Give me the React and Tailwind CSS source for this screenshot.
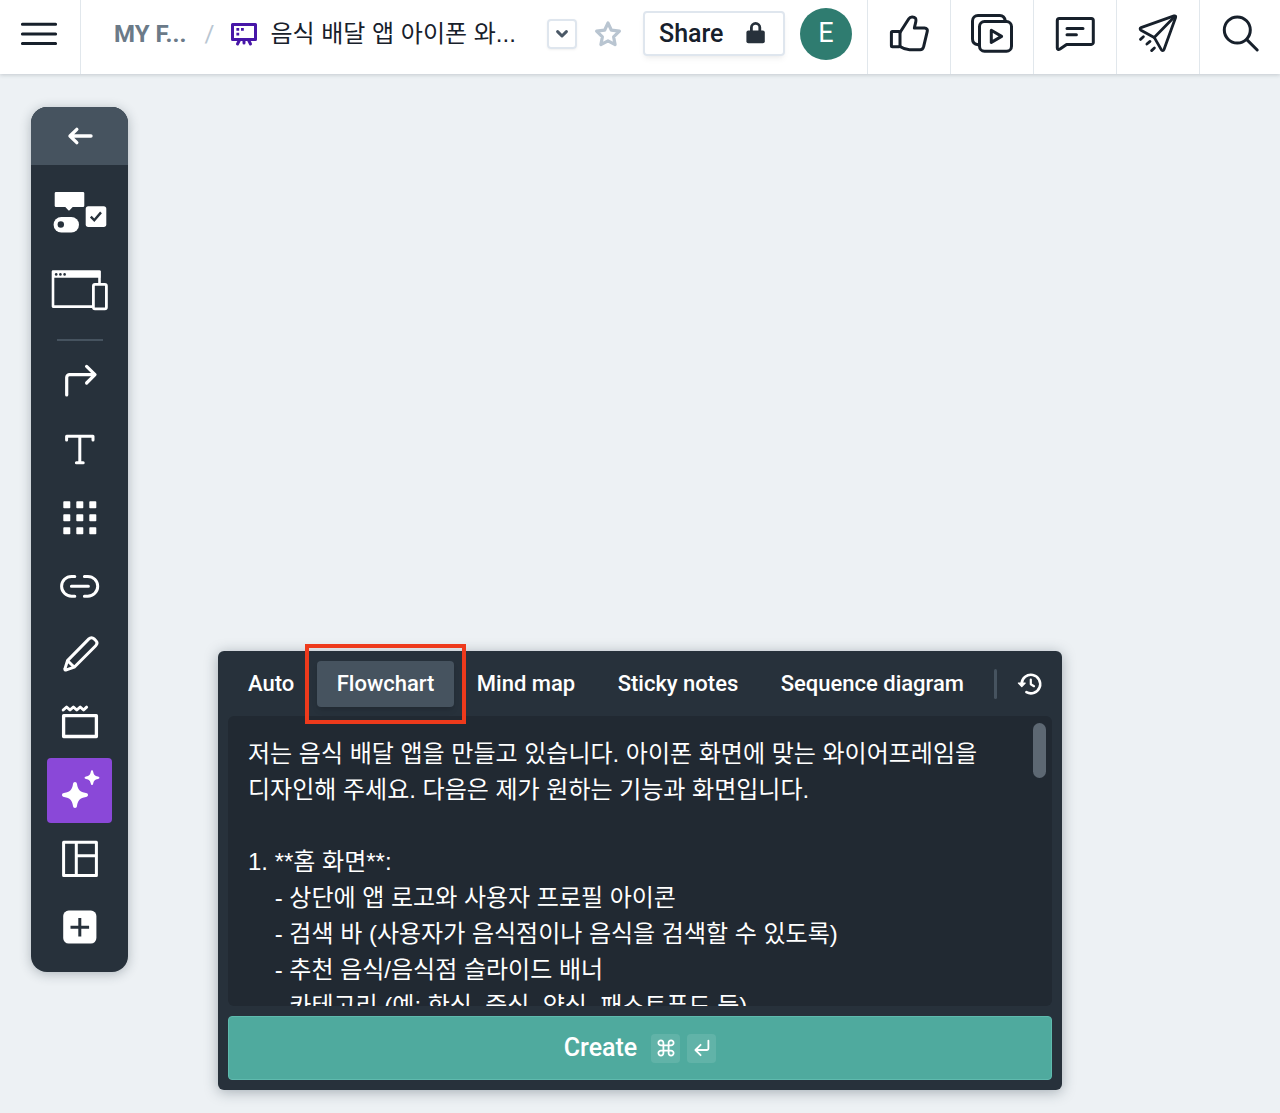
import React from "react";

const PROMPT = `저는 음식 배달 앱을 만들고 있습니다. 아이폰 화면에 맞는 와이어프레임을 디자인해 주세요. 다음은 제가 원하는 기능과 화면입니다.

1. **홈 화면**:
    - 상단에 앱 로고와 사용자 프로필 아이콘
    - 검색 바 (사용자가 음식점이나 음식을 검색할 수 있도록)
    - 추천 음식/음식점 슬라이드 배너
    - 카테고리 (예: 한식, 중식, 양식, 패스트푸드 등)`;

function Icon({ w = 40, h = 40, stroke = 3, children }) {
  return (
    <svg
      width={w}
      height={h}
      viewBox={`0 0 ${w} ${h}`}
      fill="none"
      stroke="currentColor"
      strokeWidth={stroke}
      strokeLinecap="round"
      strokeLinejoin="round"
      className="shrink-0"
      aria-hidden="true"
    >
      {children}
    </svg>
  );
}

const ThumbIcon = () => (
  <Icon>
    <rect x="2.4" y="17.4" width="8.6" height="15.4" rx="1" />
    <path d="M11 18.5 L19.8 4.8 C21.3 2.4 24.8 2.3 26.5 4.3 C28 6.3 26 10 25.4 14 H35.6 C37.8 14 38.7 15.6 38.2 17.6 L34.7 32.4 C34 35 33.2 35.8 31.2 35.8 H20.5 C16.5 35.8 14 34.6 11 32.6" />
  </Icon>
);

const PresentIcon = () => (
  <Icon w={44} h={44}>
    <rect x="9.5" y="9.5" width="32" height="29.7" rx="5" />
    <path d="M35.3 9 C34.8 5.8 33 3.5 29.8 3.5 H8 A5.5 5.5 0 0 0 2.5 9 V27 C2.5 30.5 4.8 32.4 8.2 32.8" />
    <path d="M21.3 18.3 L31.6 24.4 L21.3 30.4 Z" />
  </Icon>
);

const CommentIcon = () => (
  <Icon w={44} h={44}>
    <path d="M6.3 6.5 H38.3 A2 2 0 0 1 40.3 8.5 V30.4 A2 2 0 0 1 38.3 32.4 H13.6 L7 37 C5.4 38 4.3 37.4 4.3 36 V8.5 A2 2 0 0 1 6.3 6.5 Z" />
    <path d="M14 16.6 H30 M14 22.8 H23.4" />
  </Icon>
);

const PlaneIcon = () => (
  <Icon w={44} h={44} stroke={2.8}>
    <path d="M5 15.6 L38 3.9 C39.3 3.5 40 4.2 39.6 5.5 L28 37.5 C27.4 39 26 39 25.3 37.6 L18.2 25.4 L5 18.2 C3.8 17.5 3.8 16 5 15.6 Z" />
    <path d="M39 4.3 L18.2 25.4" />
    <path d="M4.5 27.4 L7.4 24.8 M10.9 32 L14 29.4 M15.6 38.6 L18.4 36" />
  </Icon>
);

const SearchIcon = () => (
  <Icon w={44} h={44}>
    <circle cx="19.3" cy="18" r="13" />
    <path d="M28.8 27.6 L39.2 38" />
  </Icon>
);

const BoardIcon = () => (
  <svg width="28" height="26" viewBox="0 0 28 26" fill="none" className="shrink-0" aria-hidden="true">
    <rect x="2.5" y="3.5" width="23" height="15" stroke="#4716a8" strokeWidth="3" strokeLinejoin="round" />
    <path d="M9.5 19 L7.5 23 M14 19 V22 M18.5 19 L20.5 23" stroke="#4716a8" strokeWidth="3" strokeLinecap="round" />
    <path d="M6.4 7 h2.8 v2.8 h-2.8z M11 7 h2.8 v2.8 h-2.8z M6.4 11.8 h2.8 v2.8 h-2.8z" fill="#4716a8" />
  </svg>
);

const ComponentsIcon = () => (
  <svg width="58" height="44" viewBox="0 0 58 44" aria-hidden="true">
    <g fill="#fff">
      <path d="M5 2 H32 a1.3 1.3 0 0 1 1.3 1.3 V15.8 a1.3 1.3 0 0 1 -1.3 1.3 H21.7 L18.6 20.3 a1 1 0 0 1 -1.3 0 L14.3 17.1 H5 a1.3 1.3 0 0 1 -1.3 -1.3 V3.3 A1.3 1.3 0 0 1 5 2 Z" />
      <rect x="34.7" y="16.3" width="20.6" height="20.6" rx="2.6" />
      <rect x="2.6" y="27" width="25.4" height="15.4" rx="7.7" />
    </g>
    <circle cx="9.8" cy="34.5" r="3.2" fill="#27313b" />
    <path d="M39.8 26.6 L43.3 30.3 L50 22.4" fill="none" stroke="#27313b" strokeWidth="2.4" />
  </svg>
);

const DevicesIcon = () => (
  <svg width="60" height="44" viewBox="0 0 60 44" fill="none" aria-hidden="true">
    <path d="M42 38.6 H3 V3.6 H49.5 V15" stroke="#fff" strokeWidth="2.6" strokeLinejoin="round" />
    <path d="M2 3 H50.5 V9.7 H2 Z" fill="#fff" />
    <circle cx="6.2" cy="6.4" r="1.3" fill="#27313b" />
    <circle cx="10.4" cy="6.4" r="1.3" fill="#27313b" />
    <circle cx="14.6" cy="6.4" r="1.3" fill="#27313b" />
    <rect x="43.4" y="16.3" width="13" height="24.6" rx="1.6" stroke="#fff" strokeWidth="2.8" />
  </svg>
);

const ConnectorIcon = () => (
  <Icon stroke={3.2}>
    <path d="M6.7 33 V15.6 A3 3 0 0 1 9.7 12.6 H35 M26.6 4.4 L35 12.6 L26.6 21" />
  </Icon>
);

const TextIcon = () => (
  <Icon stroke={3}>
    <path d="M6.6 10 V6.3 H33 V10 M19.8 6.3 V32.6 M16.4 32.8 H23.2" />
  </Icon>
);

const GridIcon = () => (
  <Icon stroke={0}>
    {[3.3, 16.3, 29.3].map((y) =>
      [3.3, 16.3, 29.3].map((x) => (
        <rect key={`${x}-${y}`} x={x} y={y} width="7" height="7" rx="0.8" fill="#fff" />
      ))
    )}
  </Icon>
);

const LinkIcon = () => (
  <Icon w={44}>
    <path d="M16.8 10.4 H13.5 a9.9 9.9 0 0 0 0 19.8 H16.8 M26.4 10.4 h3.4 a9.9 9.9 0 0 1 0 19.8 h-3.4 M13.4 20.3 H30.4" />
  </Icon>
);

const PencilIcon = () => (
  <Icon>
    <path d="M5 34.6 L7.5 26.6 L28.9 4.9 C30.5 3.3 32.5 3.3 34.1 4.9 L35.7 6.5 C37.3 8.1 37.3 10.1 35.7 11.7 L14.2 33.2 L6.4 35.8 C5.2 36.2 4.6 35.7 5 34.6 Z M7.7 26.8 L14 33" />
  </Icon>
);

const SectionIcon = () => (
  <Icon stroke={3}>
    <rect x="3.6" y="13.7" width="32.8" height="20.8" strokeWidth="3.3" />
    <path d="M3.2 8 L6.6 5 L10 8 L13.4 5 L16.8 8 L20.2 5 L23.6 8 L26.6 5.2" strokeWidth="3" />
  </Icon>
);

const SparklesIcon = () => (
  <Icon stroke={0}>
    <path
      fill="#fff"
      d="M15 12 C16.2 12 16.8 12.8 17 14 C17.8 19.4 19.8 22 26 23 C27.2 23.2 28 23.8 28 25 C28 26.2 27.2 26.8 26 27 C19.8 28 17.8 30.6 17 36 C16.8 37.2 16.2 38 15 38 C13.8 38 13.2 37.2 13 36 C12.2 30.6 10.2 28 4 27 C2.8 26.8 2 26.2 2 25 C2 23.8 2.8 23.2 4 23 C10.2 22 12.2 19.4 13 14 C13.2 12.8 13.8 12 15 12 Z M32 0.3 C32.8 0.3 33 1 33.2 1.8 C33.8 4.8 34.8 5.9 38 6.5 C38.8 6.7 39.4 7 39.4 7.7 C39.4 8.4 38.8 8.7 38 8.9 C34.8 9.5 33.8 10.6 33.2 13.6 C33 14.4 32.8 15.1 32 15.1 C31.2 15.1 31 14.4 30.8 13.6 C30.2 10.6 29.2 9.5 26 8.9 C25.2 8.7 24.6 8.4 24.6 7.7 C24.6 7 25.2 6.7 26 6.5 C29.2 5.9 30.2 4.8 30.8 1.8 C31 1 31.2 0.3 32 0.3 Z"
    />
  </Icon>
);

const TemplateIcon = () => (
  <Icon stroke={3}>
    <path d="M3.6 4.2 H36.4 V37.4 H3.6 Z M16.3 4.2 V37.4 M16.3 17.8 H36.4" />
  </Icon>
);

const PlusIcon = () => (
  <Icon stroke={3}>
    <rect x="3.2" y="4.6" width="33.2" height="33" rx="5.5" fill="#fff" stroke="none" />
    <path d="M19.8 12 V30.6 M10.5 21.3 H29.1" stroke="#27313b" strokeLinecap="butt" />
  </Icon>
);

const HistoryIcon = () => (
  <Icon w={26} h={24} stroke={2.6}>
    <path d="M4.6 11.6 A9.3 9.3 0 1 1 9.4 20.2" />
    <path d="M1.4 11 H8.2 L4.8 14.6 Z" fill="currentColor" strokeWidth="1.2" />
    <path d="M13.8 7.6 V12.2 L17 14.2" strokeWidth="2.2" />
  </Icon>
);

const TOOLS = [
  { name: "Connector", Glyph: ConnectorIcon },
  { name: "Text", Glyph: TextIcon },
  { name: "Icons", Glyph: GridIcon },
  { name: "Link", Glyph: LinkIcon },
  { name: "Pencil", Glyph: PencilIcon },
  { name: "Section", Glyph: SectionIcon },
  { name: "AI", Glyph: SparklesIcon, active: true },
  { name: "Templates", Glyph: TemplateIcon },
  { name: "More", Glyph: PlusIcon },
];

const ACTIONS = [
  { name: "Vote", Glyph: ThumbIcon },
  { name: "Present", Glyph: PresentIcon },
  { name: "Comments", Glyph: CommentIcon },
  { name: "Send", Glyph: PlaneIcon },
  { name: "Search", Glyph: SearchIcon },
];

const TABS = ["Auto", "Flowchart", "Mind map", "Sticky notes", "Sequence diagram"];

function Header() {
  return (
    <header className="z-10 flex h-[74px] items-stretch bg-white pb-[7px] text-[#17202b] shadow-[0_1px_4px_rgba(30,45,60,0.2)]">
      <button aria-label="Menu" className="-mb-[7px] flex w-[81px] shrink-0 items-center border-r border-[#e1e7ec] pb-[7px] pl-5">
        <Icon w={38} h={24} stroke={3}>
          <path d="M2.4 2.2 H35.6 M2.4 12 H35.6 M2.4 21.6 H35.6" />
        </Icon>
      </button>
      <nav aria-label="Breadcrumb" className="flex min-w-0 items-center pl-[33px] text-2xl">
        <a href="#files" className="shrink-0 font-bold text-[#6b7a88]">MY F...</a>
        <span className="pl-[18px] text-[#b9c6d2]">/</span>
        <a href="#board" className="flex min-w-0 items-center gap-3 pl-4">
          <BoardIcon />
          <span className="truncate font-['Liberation_Sans','Noto_Sans_CJK_KR',sans-serif]">음식 배달 앱 아이폰 와...</span>
        </a>
      </nav>
      <div className="ml-auto flex shrink-0 items-center">
        <button aria-label="Board options" className="mr-4 flex size-[30px] items-center justify-center rounded border-2 border-[#dfe6ee] text-[#4a5866] shadow-sm shadow-black/5">
          <Icon w={14} h={10} stroke={3}>
            <path d="M2.6 2.6 L7 7 L11.4 2.6" />
          </Icon>
        </button>
        <button aria-label="Add to favorites" className="mr-5 text-[#b9c5d1]">
          <Icon w={30} h={28} stroke={3.2}>
            <path d="M15 3 L18.4 10.2 L26.4 11.2 L20.6 16.8 L22.1 24.6 L15 20.8 L7.9 24.6 L9.4 16.8 L3.6 11.2 L11.6 10.2 Z" />
          </Icon>
        </button>
        <button className="mr-[15px] flex h-[45px] w-[142px] items-center justify-between rounded border-2 border-[#dfe6ee] px-[14px] text-[25px] font-medium shadow-md shadow-black/5">
          Share
          <svg width="26" height="24" viewBox="0 0 26 24" className="text-[#27313b]" aria-hidden="true">
            <rect x="3.4" y="8.6" width="18.4" height="12.6" rx="2" fill="currentColor" />
            <path d="M8.4 10 V5.6 a4.2 4.2 0 0 1 8.4 0 V10" fill="none" stroke="currentColor" strokeWidth="2.8" />
          </svg>
        </button>
        <button aria-label="Account" className="mr-[15px] flex size-[52px] items-center justify-center rounded-full bg-[#2f7c70] text-[27px] text-white">
          E
        </button>
      </div>
      <div className="-mb-[7px] flex shrink-0">
        {ACTIONS.map(({ name, Glyph }) => (
          <button
            key={name}
            aria-label={name}
            className="flex w-[83px] items-center justify-center border-l border-[#e1e7ec] pb-[7px] last:w-[81px]"
          >
            <Glyph />
          </button>
        ))}
      </div>
    </header>
  );
}

function Toolbar() {
  return (
    <aside
      aria-label="Tools"
      className="col-start-1 row-start-1 ml-[31px] flex w-[97px] flex-col items-center self-start overflow-hidden rounded-2xl bg-[#27313b] pb-3 text-white shadow-[0_2px_12px_rgba(30,45,60,0.3)]"
    >
      <button aria-label="Back" className="mb-2 flex h-[58px] w-full items-center justify-center bg-[#46535f]">
        <Icon w={26} h={20} stroke={3.4}>
          <path d="M24 10 H3.4 M9.8 3.4 L3 10 L9.8 16.6" />
        </Icon>
      </button>
      <button aria-label="Components" className="flex h-[78px] w-full items-center justify-center">
        <ComponentsIcon />
      </button>
      <button aria-label="Frames" className="flex h-[78px] w-full items-center justify-center">
        <DevicesIcon />
      </button>
      <hr className="mt-[10px] mb-[7px] h-[2px] w-[46px] border-0 bg-[#46535f]" />
      {TOOLS.map(({ name, Glyph, active }) => (
        <div key={name} className="flex h-[68px] items-center">
          <button
            aria-label={name}
            className={
              active
                ? "flex size-[65px] items-center justify-center rounded bg-[#8a48d8]"
                : "flex size-[65px] items-center justify-center rounded"
            }
          >
            <Glyph />
          </button>
        </div>
      ))}
    </aside>
  );
}

function PromptPanel() {
  return (
    <section
      aria-label="Diagram generator"
      className="col-start-1 row-start-1 w-full max-w-[844px] self-end justify-self-center rounded-md bg-[#27313b] px-[10px] pb-[10px] text-white shadow-[0_2px_14px_rgba(30,45,60,0.35)]"
    >
      <div className="flex h-[65px] items-center">
        <div role="tablist" className="flex flex-1 items-center justify-between">
          {TABS.map((tab) => (
            <div key={tab} className="relative">
              <button
                role="tab"
                aria-selected={tab === "Flowchart"}
                className={
                  tab === "Flowchart"
                    ? "h-[46px] rounded bg-[#46535f] px-5 text-[22px] font-medium whitespace-nowrap shadow-md"
                    : "h-[46px] rounded px-5 text-[22px] font-medium whitespace-nowrap"
                }
              >
                {tab}
              </button>
              {tab === "Flowchart" && (
                <span className="pointer-events-none absolute -inset-x-3 -top-[17px] -bottom-[17px] z-10 border-4 border-[#ee3a1c]" />
              )}
            </div>
          ))}
        </div>
        <span className="ml-[10px] h-[30px] w-[3px] rounded-full bg-[#46535f]" />
        <button aria-label="History" className="mr-[9px] ml-5">
          <HistoryIcon />
        </button>
      </div>
      <div className="relative">
        <textarea
          aria-label="Prompt"
          defaultValue={PROMPT}
          className="block h-[290px] w-full resize-none rounded-md bg-[#212932] pt-5 pr-[50px] pl-5 font-['Liberation_Sans','Noto_Sans_CJK_KR',sans-serif] text-2xl leading-9 outline-none [scrollbar-width:none]"
        />
        <span className="pointer-events-none absolute top-[7px] right-[6px] h-[55px] w-[13px] rounded-full bg-[#5d6873]" />
      </div>
      <button className="mt-[10px] flex h-[64px] w-full items-center justify-center rounded border border-[#5fbaae] bg-[#4faa9e] text-[25px] font-medium">
        Create
        <kbd className="ml-[14px] flex size-[29px] items-center justify-center rounded bg-white/10">
          <Icon w={18} h={18} stroke={1.8}>
            <path d="M6.4 6.4 H11.6 V11.6 H6.4 Z M6.4 6.4 H4 A2.5 2.5 0 1 1 6.4 4 Z M11.6 6.4 V4 A2.5 2.5 0 1 1 14 6.4 Z M11.6 11.6 H14 A2.5 2.5 0 1 1 11.6 14 Z M6.4 11.6 V14 A2.5 2.5 0 1 1 4 11.6 Z" />
          </Icon>
        </kbd>
        <kbd className="ml-[7px] flex size-[29px] items-center justify-center rounded bg-white/10">
          <Icon w={18} h={18} stroke={1.8}>
            <path d="M15.4 1.6 V9.4 A1.6 1.6 0 0 1 13.8 11 H2.6 M7.6 5.8 L2.4 11 L7.6 16.2" />
          </Icon>
        </kbd>
      </button>
    </section>
  );
}

export default function App() {
  return (
    <div className="flex min-h-screen flex-col bg-[#edf1f4] font-['Roboto','Noto_Sans_CJK_KR',sans-serif]">
      <Header />
      <main className="grid flex-1 grid-cols-1 pt-[33px] pb-[23px]">
        <Toolbar />
        <PromptPanel />
      </main>
    </div>
  );
}
